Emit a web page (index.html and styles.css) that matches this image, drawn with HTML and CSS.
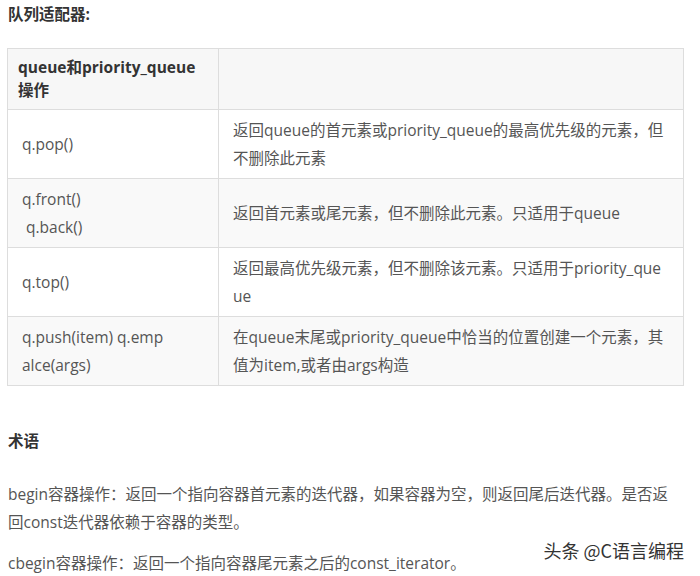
FILE: index.html
```html
<!DOCTYPE html>
<html lang="zh-CN">
<head>
<meta charset="utf-8">
<title>队列适配器</title>
<link rel="stylesheet" href="styles.css">
</head>
<body>
<div class="page">
  <p class="title">队列适配器:</p>
  <table class="ops">
    <tr class="head">
      <th class="c1">queue和priority_queue操作</th>
      <th class="c2"></th>
    </tr>
    <tr>
      <td class="c1">q.pop()</td>
      <td class="c2">返回queue的首元素或priority_queue的最高优先级的元素，但不删除此元素</td>
    </tr>
    <tr class="alt">
      <td class="c1">q.front()<br>&nbsp;q.back()</td>
      <td class="c2">返回首元素或尾元素，但不删除此元素。只适用于queue</td>
    </tr>
    <tr>
      <td class="c1">q.top()</td>
      <td class="c2">返回最高优先级元素，但不删除该元素。只适用于priority_que<br>ue</td>
    </tr>
    <tr class="alt">
      <td class="c1">q.push(item) q.emp<br>alce(args)</td>
      <td class="c2">在queue末尾或priority_queue中恰当的位置创建一个元素，其值为item,或者由args构造</td>
    </tr>
  </table>
  <p class="heading">术语</p>
  <p class="para">begin容器操作：返回一个指向容器首元素的迭代器，如果容器为空，则返回尾后迭代器。是否返回const迭代器依赖于容器的类型。</p>
  <p class="para last">cbegin容器操作：返回一个指向容器尾元素之后的const_iterator。</p>
  <div class="watermark">头条 @C语言编程</div>
</div>
</body>
</html>
```

FILE: styles.css
```css
html, body {
  margin: 0;
  padding: 0;
  background: #ffffff;
}

.page {
  position: relative;
  width: 700px;
  height: 576px;
  overflow: hidden;
  padding: 0 16px 0 8px;
  box-sizing: border-box;
  font-family: "Open Sans", "Noto Sans CJK SC", sans-serif;
  font-size: 15.5px;
  line-height: 28px;
  color: #555555;
}

.title {
  margin: 0 0 20px 0;
  font-weight: bold;
  color: #333333;
}

.ops {
  width: 677px;
  margin-left: -1px;
  border-collapse: collapse;
  table-layout: fixed;
}

.ops th,
.ops td {
  border: 1px solid #dddddd;
  padding: 6px 14px 6px 14px;
  text-align: left;
  vertical-align: middle;
  word-break: break-all;
}

.ops th {
  font-weight: bold;
  color: #333333;
  line-height: 23px;
  padding: 7px 10px 7px 10px;
}

.ops .c1 {
  width: 182px;
}

.ops th.c1 {
  width: 190px;
}

.head {
  background: #f7f7f7;
}

.alt {
  background: #f9f9f9;
}

.heading {
  margin: 41px 0 25px 0;
  font-weight: bold;
  color: #333333;
}

.para {
  margin: 0 8px 13px 0;
}

.watermark {
  position: absolute;
  right: 16px;
  top: 536px;
  font-family: "Noto Sans CJK SC", sans-serif;
  font-size: 18px;
  line-height: 28px;
  color: #333333;
  text-shadow: 0 0 2px #ffffff, 0 0 2px #ffffff;
}
```
